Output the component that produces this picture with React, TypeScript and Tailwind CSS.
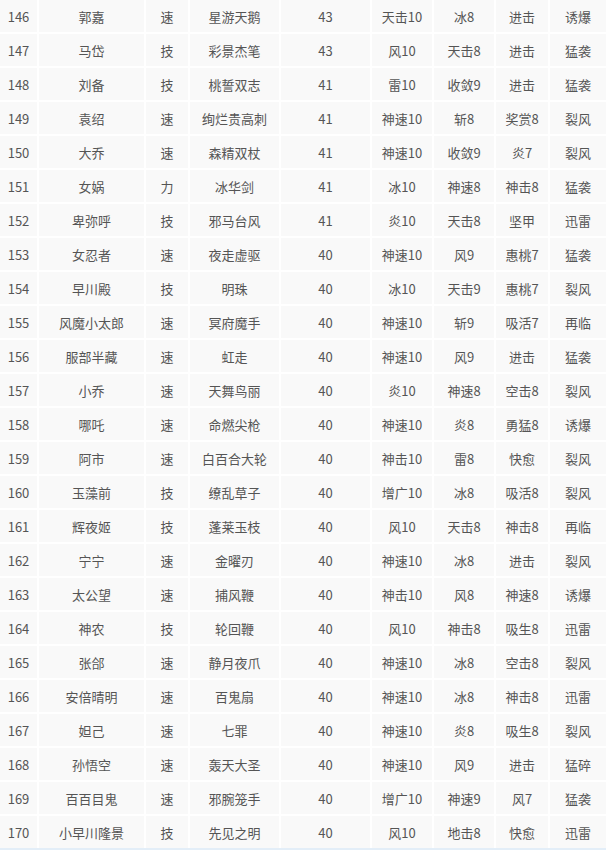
type Row = [string, string, string, string, string, string, string, string, string]

const rows: Row[] = [
  ['146', '郭嘉', '速', '星游天鹅', '43', '天击10', '冰8', '进击', '诱爆'],
  ['147', '马岱', '技', '彩景杰笔', '43', '风10', '天击8', '进击', '猛袭'],
  ['148', '刘备', '技', '桃誓双志', '41', '雷10', '收敛9', '进击', '猛袭'],
  ['149', '袁绍', '速', '绚烂贵高刺', '41', '神速10', '斩8', '奖赏8', '裂风'],
  ['150', '大乔', '速', '森精双杖', '41', '神速10', '收敛9', '炎7', '裂风'],
  ['151', '女娲', '力', '冰华剑', '41', '冰10', '神速8', '神击8', '猛袭'],
  ['152', '卑弥呼', '技', '邪马台风', '41', '炎10', '天击8', '坚甲', '迅雷'],
  ['153', '女忍者', '速', '夜走虚驱', '40', '神速10', '风9', '惠桃7', '猛袭'],
  ['154', '早川殿', '技', '明珠', '40', '冰10', '天击9', '惠桃7', '裂风'],
  ['155', '风魔小太郎', '速', '冥府魔手', '40', '神速10', '斩9', '吸活7', '再临'],
  ['156', '服部半藏', '速', '虹走', '40', '神速10', '风9', '进击', '猛袭'],
  ['157', '小乔', '速', '天舞鸟丽', '40', '炎10', '神速8', '空击8', '裂风'],
  ['158', '哪吒', '速', '命燃尖枪', '40', '神速10', '炎8', '勇猛8', '诱爆'],
  ['159', '阿市', '速', '白百合大轮', '40', '神击10', '雷8', '快愈', '裂风'],
  ['160', '玉藻前', '技', '缭乱草子', '40', '增广10', '冰8', '吸活8', '裂风'],
  ['161', '辉夜姬', '技', '蓬莱玉枝', '40', '风10', '天击8', '神击8', '再临'],
  ['162', '宁宁', '速', '金曜刃', '40', '神速10', '冰8', '进击', '裂风'],
  ['163', '太公望', '速', '捕风鞭', '40', '神击10', '风8', '神速8', '诱爆'],
  ['164', '神农', '技', '轮回鞭', '40', '风10', '神击8', '吸生8', '迅雷'],
  ['165', '张郃', '速', '静月夜爪', '40', '神速10', '冰8', '空击8', '裂风'],
  ['166', '安倍晴明', '速', '百鬼扇', '40', '神速10', '冰8', '神击8', '迅雷'],
  ['167', '妲己', '速', '七罪', '40', '神速10', '炎8', '吸生8', '裂风'],
  ['168', '孙悟空', '速', '轰天大圣', '40', '神速10', '风9', '进击', '猛碎'],
  ['169', '百百目鬼', '速', '邪腕笼手', '40', '增广10', '神速9', '风7', '猛袭'],
  ['170', '小早川隆景', '技', '先见之明', '40', '风10', '地击8', '快愈', '迅雷'],
]

export default function App() {
  return (
    <div className="w-[606px] bg-white font-['Noto_Sans_CJK_SC',sans-serif] text-[13px] text-[#555]">
      <div className="grid grid-cols-[37px_105px_42px_89px_89px_60px_60px_52px_56px] gap-[2px] border-b-2 border-[#e3eef8]">
        {rows.map(row =>
          row.map((cell, i) => (
            <div
              key={row[0] + '-' + i}
              className="flex h-[32px] items-center justify-center bg-[#f9f9f9] leading-none"
            >
              {cell}
            </div>
          ))
        )}
      </div>
    </div>
  )
}
